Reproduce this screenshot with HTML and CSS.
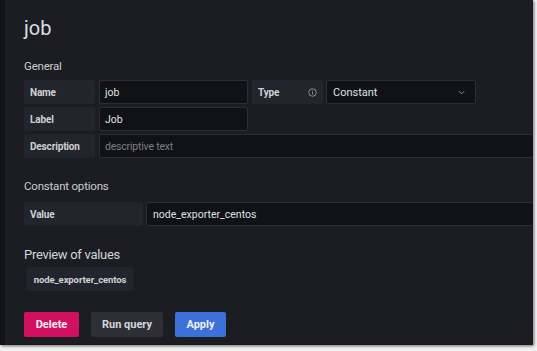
FILE: index.html
```html
<!DOCTYPE html>
<html>
<head>
<meta charset="utf-8">
<link rel="stylesheet" href="styles.css">
</head>
<body>
<div class="frame">
  <div class="page">
    <h1 class="title">job</h1>
    <div class="section-title">General</div>
    <div class="rows">
      <div class="row">
        <div class="label w71">Name</div>
        <div class="input w149">job</div>
        <div class="label w71 type-label"><span>Type</span>
          <svg class="info" width="9" height="9" viewBox="0 0 10 10"><circle cx="5" cy="5" r="4.2" fill="none" stroke="#9fa1a6" stroke-width="0.9"/><rect x="4.55" y="4.2" width="0.9" height="3" fill="#9fa1a6"/><rect x="4.55" y="2.6" width="0.9" height="0.9" fill="#9fa1a6"/></svg>
        </div>
        <div class="input select w150"><span>Constant</span>
          <svg class="chev" width="7" height="5" viewBox="0 0 8 5"><path d="M1 1 L4 4 L7 1" fill="none" stroke="#9fa1a6" stroke-width="1"/></svg>
        </div>
      </div>
      <div class="row">
        <div class="label w71">Label</div>
        <div class="input w149">Job</div>
      </div>
      <div class="row">
        <div class="label w71">Description</div>
        <div class="input grow placeholder">descriptive text</div>
      </div>
    </div>
    <div class="section-title second">Constant options</div>
    <div class="row value-row">
      <div class="label w119">Value</div>
      <div class="input grow">node_exporter_centos</div>
    </div>
    <div class="preview-title">Preview of values</div>
    <div class="chip">node_exporter_centos</div>
    <div class="buttons">
      <div class="btn danger">Delete</div>
      <div class="btn secondary">Run query</div>
      <div class="btn primary">Apply</div>
    </div>
  </div>
</div>
</body>
</html>
```
FILE: styles.css
```css
html, body {
  margin: 0;
  padding: 0;
  background: #f2f2f2;
  width: 537px;
  height: 351px;
  overflow: hidden;
}
.frame {
  width: 528px;
  height: 345px;
  background: #1b1d22;
  border-left: 5px solid #131418;
  box-shadow: 1px 1px 3px rgba(0,0,0,0.55);
  font-family: Roboto, "Liberation Sans", sans-serif;
  color: #d8d9da;
  overflow: hidden;
}
.page {
  padding: 16px 0 0 19px;
}
.title {
  margin: 0;
  font-size: 20px;
  line-height: 24px;
  font-weight: 400;
  color: #dcdde0;
}
.section-title {
  margin-top: 19px;
  font-size: 11.5px;
  line-height: 14px;
  letter-spacing: -0.2px;
  color: #ccccd0;
}
.section-title.second {
  margin-top: 21px;
}
.rows {
  margin-top: 7px;
  display: flex;
  flex-direction: column;
  gap: 3px;
}
.row {
  display: flex;
  height: 24px;
  gap: 4px;
}
.label {
  box-sizing: border-box;
  background: #22252b;
  border-radius: 2px;
  font-size: 10px;
  font-weight: 700;
  letter-spacing: -0.15px;
  color: #d0d1d5;
  padding-left: 6px;
  display: flex;
  align-items: center;
}
.w71 { width: 71px; }
.w119 { width: 119px; }
.w149 { width: 149px; }
.w150 { width: 150px; }
.type-label {
  justify-content: space-between;
  padding-right: 6px;
}
.input {
  box-sizing: border-box;
  background: #111217;
  border: 1px solid #2b2e34;
  border-radius: 2px;
  font-size: 10.5px;
  color: #dfe0e3;
  padding-left: 5px;
  display: flex;
  align-items: center;
}
.row .select {
  margin-left: -1px;
  justify-content: space-between;
  padding-left: 6px;
  padding-right: 10px;
  font-size: 11px;
}
.grow {
  flex: 1;
  border-right: none;
  border-radius: 2px 0 0 2px;
}
.placeholder {
  color: #7d7f85;
  letter-spacing: -0.2px;
}
.value-row {
  margin-top: 9px;
  gap: 3px;
}
.value-row .input {
  padding-left: 6px;
}
.preview-title {
  margin-top: 20px;
  font-size: 13px;
  line-height: 18px;
  letter-spacing: -0.3px;
  color: #d3d4d8;
}
.chip {
  margin-top: 3px;
  margin-left: 3px;
  width: 106px;
  height: 24px;
  box-sizing: border-box;
  background: #22252b;
  border-radius: 2px;
  font-size: 9.5px;
  font-weight: 700;
  letter-spacing: -0.1px;
  color: #d0d1d5;
  display: flex;
  align-items: center;
  justify-content: center;
}
.buttons {
  margin-top: 21px;
  display: flex;
  gap: 12px;
}
.btn {
  height: 25px;
  box-sizing: border-box;
  border-radius: 2px;
  font-size: 11px;
  font-weight: 700;
  color: #f0f0f3;
  display: flex;
  align-items: center;
  justify-content: center;
}
.danger { background: #d1105f; width: 55px; }
.secondary { background: #2d2f34; width: 72px; color: #d5d6d9; }
.primary { background: #3b71d8; width: 51px; }
```
